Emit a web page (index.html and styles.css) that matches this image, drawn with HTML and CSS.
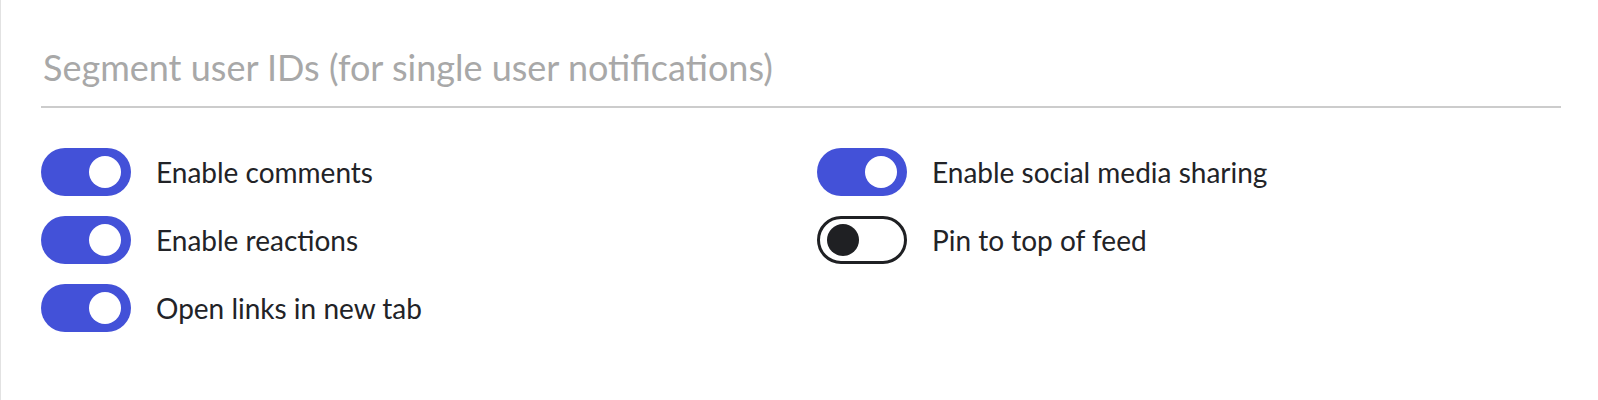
FILE: index.html
```html
<!DOCTYPE html>
<html lang="en">
<head>
<meta charset="utf-8">
<title>Notification settings</title>
<link rel="stylesheet" href="styles.css">
</head>
<body>
<div class="panel">
  <div class="field">
    <input class="text-input" type="text" placeholder="Segment user IDs (for single user notifications)">
  </div>
  <div class="toggles">
    <label class="toggle-row">
      <span class="switch on"><span class="knob"></span></span>
      <span class="toggle-label">Enable comments</span>
    </label>
    <label class="toggle-row">
      <span class="switch on"><span class="knob"></span></span>
      <span class="toggle-label">Enable reactions</span>
    </label>
    <label class="toggle-row">
      <span class="switch on"><span class="knob"></span></span>
      <span class="toggle-label">Open links in new tab</span>
    </label>
    <label class="toggle-row">
      <span class="switch on"><span class="knob"></span></span>
      <span class="toggle-label">Enable social media sharing</span>
    </label>
    <label class="toggle-row">
      <span class="switch off"><span class="knob"></span></span>
      <span class="toggle-label">Pin to top of feed</span>
    </label>
  </div>
</div>
</body>
</html>
```
FILE: styles.css
```css
* { box-sizing: border-box; }
html, body { margin: 0; background: #ffffff; }
body { font-family: Lato, "Open Sans", sans-serif; color: #222327; }

.panel {
  height: 400px;
  border-left: 1px solid #e2e2e2;
  padding: 0 37px 0 40px;
}

.field { padding-top: 48px; }

.text-input {
  display: block;
  width: 100%;
  border: none;
  border-bottom: 2px solid #cccccc;
  outline: none;
  background: transparent;
  font-family: Lato, sans-serif;
  font-size: 36px;
  line-height: 38px;
  height: 60px;
  padding: 0 0 20px 2px;
  color: #222327;
}
.text-input::placeholder { color: #a8a8a8; opacity: 1; }

.toggles {
  display: grid;
  grid-template-columns: 1fr 1fr;
  grid-template-rows: repeat(3, 48px);
  grid-auto-flow: column;
  column-gap: 32px;
  row-gap: 20px;
  margin-top: 40px;
}

.toggle-row {
  display: flex;
  align-items: center;
  gap: 25px;
}

.switch {
  flex: none;
  width: 90px;
  height: 48px;
  border-radius: 24px;
  display: flex;
  align-items: center;
}
.switch.on {
  background: #4351d8;
  justify-content: flex-end;
  padding: 0 10px;
}
.switch.on .knob { background: #ffffff; }
.switch.off {
  background: #ffffff;
  border: 3px solid #1f2023;
  justify-content: flex-start;
  padding: 0 7px;
}
.switch.off .knob { background: #1f2023; }

.knob {
  width: 32px;
  height: 32px;
  border-radius: 50%;
}

.toggle-label {
  font-size: 28px;
  line-height: 34px;
  color: #222327;
}
```
